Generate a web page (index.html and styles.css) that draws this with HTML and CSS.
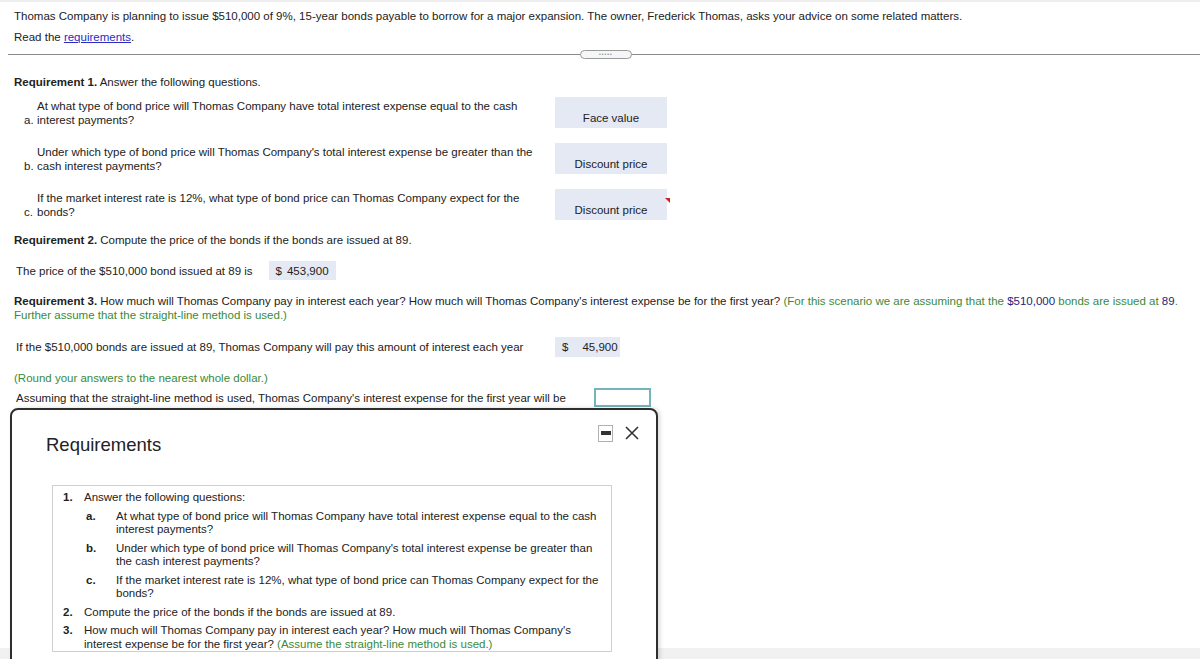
FILE: index.html
```html
<!DOCTYPE html>
<html lang="en">
<head>
    <meta charset="UTF-8">
    <meta name="viewport" content="width=device-width, initial-scale=1.0">
    <title>Bonds Payable</title>
    <link rel="stylesheet" href="styles.css">
</head>
<body>
    <div class="page">
        <div class="intro">
            <p>Thomas Company is planning to issue $510,000 of 9%, 15-year bonds payable to borrow for a major expansion. The owner, Frederick Thomas, asks your advice on some related matters.</p>
            <p>Read the <a href="#" class="link">requirements</a>.</p>
        </div>

        <div class="divider">
            <span class="pill">&bull;&bull;&bull;&bull;&bull;</span>
        </div>

        <div class="content">
            <p class="req"><b>Requirement 1.</b> Answer the following questions.</p>

            <div class="qrow">
                <span class="qlabel">a.</span>
                <span class="qtext">At what type of bond price will Thomas Company have total interest expense equal to the cash interest payments?</span>
                <span class="answer">Face value</span>
            </div>
            <div class="qrow">
                <span class="qlabel">b.</span>
                <span class="qtext">Under which type of bond price will Thomas Company's total interest expense be greater than the cash interest payments?</span>
                <span class="answer">Discount price</span>
            </div>
            <div class="qrow">
                <span class="qlabel">c.</span>
                <span class="qtext">If the market interest rate is 12%, what type of bond price can Thomas Company expect for the bonds?</span>
                <span class="answer flagged">Discount price</span>
            </div>

            <p class="req req2"><b>Requirement 2.</b> Compute the price of the bonds if the bonds are issued at 89.</p>

            <div class="line price-line">
                <span>The price of the $510,000 bond issued at 89 is</span>
                <span class="amount"><span>$</span><span>453,900</span></span>
            </div>

            <p class="req req3"><b>Requirement 3.</b> How much will Thomas Company pay in interest each year? How much will Thomas Company's interest expense be for the first year? <span class="green">(For this scenario we are assuming that the <span class="navy">$510,000</span> bonds are issued at <span class="navy">89</span>.</span><br><span class="green">Further assume that the straight-line method is used.)</span></p>

            <div class="line pay-line">
                <span class="line-text">If the $510,000 bonds are issued at 89, Thomas Company will pay this amount of interest each year</span>
                <span class="amount"><span>$</span><span>45,900</span></span>
            </div>

            <p class="green round">(Round your answers to the nearest whole dollar.)</p>

            <div class="line expense-line">
                <span class="line-text">Assuming that the straight-line method is used, Thomas Company's interest expense for the first year will be</span>
                <span class="input-box"></span>
            </div>
        </div>
    </div>

    <div class="scrollbar"></div>

    <div class="modal">
        <div class="modal-head">
            <h2>Requirements</h2>
            <div class="modal-tools">
                <span class="minimize"><span class="bar"></span></span>
                <svg class="close" width="16" height="16" viewBox="0 0 16 16">
                    <path d="M2 2 L14 14 M14 2 L2 14" stroke="#333" stroke-width="1.6" fill="none"/>
                </svg>
            </div>
        </div>
        <div class="req-box">
            <ol class="req-list">
                <li>
                    <span class="num">1.</span>
                    <div>
                        Answer the following questions:
                        <ul class="sub-list">
                            <li><span class="sub">a.</span><span>At what type of bond price will Thomas Company have total interest expense equal to the cash interest payments?</span></li>
                            <li><span class="sub">b.</span><span>Under which type of bond price will Thomas Company's total interest expense be greater than the cash interest payments?</span></li>
                            <li><span class="sub">c.</span><span>If the market interest rate is 12%, what type of bond price can Thomas Company expect for the bonds?</span></li>
                        </ul>
                    </div>
                </li>
                <li>
                    <span class="num">2.</span>
                    <div>Compute the price of the bonds if the bonds are issued at 89.</div>
                </li>
                <li>
                    <span class="num">3.</span>
                    <div>How much will Thomas Company pay in interest each year? How much will Thomas Company's<br>interest expense be for the first year? <span class="green">(Assume the straight-line method is used.)</span></div>
                </li>
            </ol>
        </div>
    </div>
</body>
</html>
```

FILE: styles.css
```css
body {
    margin: 0;
    font-family: "Liberation Sans", Arial, sans-serif;
    font-size: 11.5px;
    line-height: 14px;
    color: #222;
    background: #fff;
    overflow: hidden;
    height: 659px;
}

p {
    margin: 0;
}

.page {
    border-top: 2px solid #eee;
}

.intro {
    padding: 7px 14px 0 14px;
}

.intro p + p {
    margin-top: 7px;
}

.link {
    color: #2a2ac4;
}

.divider {
    margin: 10px 0 0 8px;
    height: 1px;
    background: #8a8a8a;
    position: relative;
}

.pill {
    position: absolute;
    left: 572px;
    top: -4px;
    width: 50px;
    height: 7px;
    border: 1px solid #9a9a9a;
    border-radius: 5px;
    background: #f5f6f8;
    color: #8a8a8a;
    font-size: 5px;
    line-height: 7px;
    text-align: center;
    letter-spacing: 1px;
}

.content {
    padding: 20px 14px 0 14px;
}

.green {
    color: #3a8a3a;
}

.navy {
    color: #25257a;
}

.qrow {
    display: flex;
    align-items: center;
    margin-left: 10px;
    height: 31px;
}

.req + .qrow {
    margin-top: 8px;
}

.qrow + .qrow {
    margin-top: 15px;
}

.qlabel {
    width: 13px;
    align-self: flex-end;
    margin-bottom: 1px;
}

.qtext {
    width: 505px;
}

.answer {
    margin-left: 13px;
    width: 112px;
    height: 31px;
    box-sizing: border-box;
    padding-top: 14px;
    line-height: 14px;
    text-align: center;
    background: #e5e9f4;
    position: relative;
}

.flagged::after {
    content: "";
    position: absolute;
    right: -3px;
    top: 9px;
    border-left: 5px solid transparent;
    border-top: 5px solid #d02020;
}

.req2 {
    margin-top: 13px;
}

.line {
    display: flex;
    align-items: center;
    padding-left: 2px;
}

.price-line {
    margin-top: 14px;
}

.amount {
    display: flex;
    align-items: center;
    box-sizing: border-box;
    padding-left: 7px;
    background: #e5e9f4;
}

.price-line .amount {
    margin-left: 16px;
    width: 67px;
    height: 19px;
    gap: 5px;
}

.req3 {
    margin-top: 14px;
}

.pay-line {
    margin-top: 15px;
}

.line-text {
    width: 539px;
}

.pay-line .amount {
    width: 65px;
    height: 20px;
    gap: 14px;
}

.round {
    margin-top: 14px;
}

.expense-line {
    margin-top: 3px;
}

.expense-line .line-text {
    width: 578px;
}

.input-box {
    width: 57px;
    height: 19px;
    box-sizing: border-box;
    border: 2px solid #74b4bb;
}

.scrollbar {
    position: absolute;
    left: 0;
    right: 0;
    top: 648px;
    height: 11px;
    background: #f1f1f1;
}

.modal {
    position: absolute;
    left: 10px;
    top: 408px;
    width: 644px;
    height: 270px;
    border: 2px solid #2e2e2e;
    border-radius: 8px;
    background: #fff;
    box-shadow: 2px 0 4px rgba(0, 0, 0, 0.15);
}

.modal-head {
    display: flex;
    justify-content: space-between;
    padding: 14px 16px 0 34px;
}

.modal-head h2 {
    margin: 10px 0 0 0;
    font-size: 18.5px;
    font-weight: normal;
    line-height: 22px;
    color: #222;
}

.modal-tools {
    display: flex;
    align-items: center;
    gap: 11px;
    height: 18px;
}

.minimize {
    width: 15px;
    height: 17px;
    box-sizing: border-box;
    border: 1px solid #b0b0b0;
    display: flex;
    align-items: center;
    justify-content: center;
}

.minimize .bar {
    width: 10px;
    height: 4px;
    background: #333;
}

.req-box {
    margin: 29px 0 0 40px;
    width: 560px;
    border: 1px solid #cfcfcf;
    padding: 5px 0 0 10px;
    box-sizing: border-box;
    line-height: 13.5px;
}

.req-list,
.sub-list {
    list-style: none;
    margin: 0;
    padding: 0;
}

.req-list > li {
    display: flex;
}

.req-list > li + li {
    margin-top: 5px;
}

.num {
    width: 21px;
    flex-shrink: 0;
    font-weight: bold;
}

.req-list > li > div {
    width: 520px;
}

.sub-list {
    margin-top: 5px;
    padding-left: 2px;
}

.sub-list li {
    display: flex;
}

.sub-list li + li {
    margin-top: 5px;
}

.sub {
    width: 30px;
    flex-shrink: 0;
    font-weight: bold;
}
```
